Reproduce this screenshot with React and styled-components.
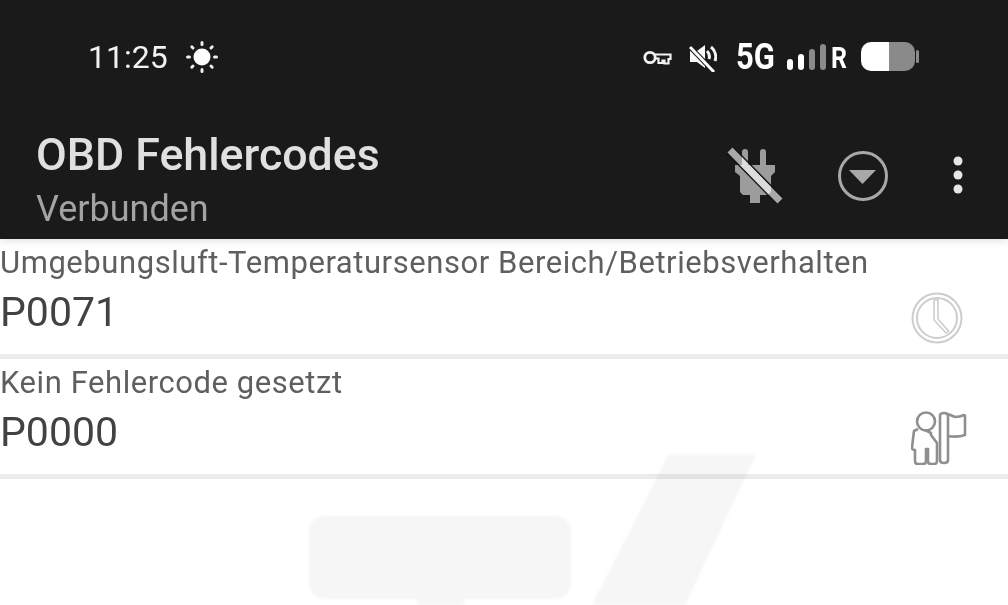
import React from 'react';
import styled, {createGlobalStyle} from 'styled-components';

const GlobalStyle = createGlobalStyle`
    html, body {
        margin: 0;
        padding: 0;
        background: #fff;
        overflow: hidden;
    }
`;

const Page = styled.div`
    position: relative;
    width: 1008px;
    height: 605px;
    overflow: hidden;
    background: #fff;
    font-family: Roboto, "Liberation Sans", sans-serif;
`;

const Watermark = styled.svg`
    position: absolute;
    left: 0;
    top: 0;
    filter: blur(1px);
    mix-blend-mode: multiply;
    pointer-events: none;
`;

const Header = styled.header`
    position: relative;
    height: 239px;
    background: #1a1a1a;
    box-shadow: 0 2px 8px rgba(0, 0, 0, 0.12);
`;

const StatusBar = styled.div`
    display: flex;
    align-items: center;
    justify-content: space-between;
    height: 114px;
    padding: 0 88px 0 88px;
`;

const StatusGroup = styled.div`
    display: flex;
    align-items: center;
`;

const Time = styled.span`
    font-size: 32px;
    color: #f2f2f2;
    margin-right: 18px;
`;

const NetworkLabel = styled.span`
    display: inline-block;
    font-size: ${p => p.$size}px;
    font-weight: 700;
    color: #fff;
    transform: scaleX(${p => p.$squeeze});
    transform-origin: left center;
    width: ${p => p.$width}px;
    margin: ${p => p.$margin};
    line-height: 1;
`;

const AppBar = styled.div`
    display: flex;
    justify-content: space-between;
    padding: 15px 45px 0 36px;
`;

const TitleBlock = styled.div`
    display: flex;
    flex-direction: column;
`;

const Title = styled.div`
    font-size: 44.7px;
    line-height: 52px;
    font-weight: 500;
    color: #e0e0e0;
`;

const Subtitle = styled.div`
    font-size: 36px;
    line-height: 42px;
    margin-top: 7px;
    color: #a3a3a3;
`;

const Actions = styled.div`
    display: flex;
    align-items: flex-start;
    padding-top: 15px;
`;

const List = styled.div`
    position: relative;
`;

const Row = styled.div`
    display: flex;
    justify-content: space-between;
    height: 115px;
    border-bottom: 5px solid #ececec;
    padding-right: ${p => p.$right}px;
`;

const RowText = styled.div`
    display: flex;
    flex-direction: column;
`;

const Label = styled.div`
    font-size: 31px;
    letter-spacing: 0.56px;
    line-height: 36px;
    margin-top: 6px;
    color: #5f5f5f;
`;

const Code = styled.div`
    font-size: 41px;
    line-height: 48px;
    margin-top: 7px;
    color: #424242;
`;

const RowIcon = styled.div`
    padding-top: ${p => p.$top}px;
    svg {
        display: block;
    }
`;

const SunIcon = () => (
    <svg width="32" height="32" viewBox="0 0 32 32">
        <circle cx="16" cy="16" r="8.5" fill="#fff" />
        <g stroke="#eee" strokeWidth="3" strokeLinecap="round">
            <path d="M16 1.5v2M16 28.5v2M1.5 16h2M28.5 16h2M5.8 5.8l1.2 1.2M25 25l1.2 1.2M5.8 26.2L7 25M25 7l1.2-1.2" />
        </g>
    </svg>
);

const KeyIcon = () => (
    <svg width="29" height="18" viewBox="0 0 29 18" style={{marginRight: 17}}>
        <circle cx="7" cy="9.500" r="5.200" fill="none" stroke="#f2f2f2" strokeWidth="2.800" />
        <path d="M12 6.500h15.500v4.500h-2v4.500h-4v-3h-2v2.500h-4v-4.500H12" fill="none" stroke="#f2f2f2" strokeWidth="2.200" />
    </svg>
);

const MuteIcon = () => (
    <svg width="28" height="30" viewBox="0 0 28 30" style={{marginRight: 19}}>
        <path d="M1 9h7l8-6v23l-8-6H1z" fill="#fafafa" />
        <path d="M18 9a8 8 0 0 1 2 8M22 5a13 13 0 0 1 4 14" fill="none" stroke="#f4f4f4" strokeWidth="3" />
        <path d="M1 5l24 25" stroke="#1a1a1a" strokeWidth="5" />
        <path d="M1 5l24 25" stroke="#fafafa" strokeWidth="3" />
    </svg>
);

const SignalIcon = () => (
    <svg width="40" height="27" viewBox="0 0 40 27" style={{marginRight: 4, marginTop: 1}}>
        <rect x="0" y="15" width="6" height="11" rx="3" fill="#fff" />
        <rect x="11" y="10" width="6" height="16" rx="3" fill="#fff" />
        <rect x="22" y="5" width="6" height="21" rx="3" fill="#8a8a8a" />
        <rect x="33" y="0" width="6" height="26" rx="3" fill="#8a8a8a" />
    </svg>
);

const BatteryIcon = () => (
    <svg width="59" height="30" viewBox="0 0 59 30">
        <defs>
            <clipPath id="battery-body">
                <rect x="0" y="0" width="54" height="29" rx="10" />
            </clipPath>
        </defs>
        <g clipPath="url(#battery-body)">
            <rect x="0" y="0" width="28" height="29" fill="#fff" />
            <rect x="28" y="0" width="26" height="29" fill="#8a8a8a" />
        </g>
        <rect x="55" y="8" width="3" height="13" rx="1.5" fill="#8a8a8a" />
    </svg>
);

const PLUG_PATH =
    'M17 8a3 3 0 0 1 6 0v13h12V8a3 3 0 0 1 6 0v13h9v7l-4 4v16l-3 3H35v8H25v-8h-7l-3-3V32l-5-4v-7h7z';

const PlugIcon = () => (
    <svg width="60" height="62" viewBox="0 0 60 62" style={{marginRight: 52}}>
        <defs>
            <clipPath id="plug-body">
                <path d={PLUG_PATH} />
            </clipPath>
        </defs>
        <path d={PLUG_PATH} fill="#9c9c9c" />
        <path d="M5 6l50 51" stroke="#141414" strokeWidth="10" />
        <path d="M5 6l50 51" stroke="#a8a8a8" strokeWidth="7" />
        <path d="M5 6l50 51" stroke="#dcdcdc" strokeWidth="7" clipPath="url(#plug-body)" />
    </svg>
);

const DropdownIcon = () => (
    <svg width="52" height="52" viewBox="0 0 52 52" style={{marginRight: 64, marginTop: 6}}>
        <circle cx="26" cy="26" r="23.5" fill="none" stroke="#a8a8a8" strokeWidth="3" />
        <path d="M12 20h27L25.500 34z" fill="#a8a8a8" />
    </svg>
);

const MoreIcon = () => (
    <svg width="10" height="40" viewBox="0 0 10 40" style={{marginTop: 12}}>
        <circle cx="5" cy="5" r="4.5" fill="#e6e6e6" />
        <circle cx="5" cy="19" r="4.5" fill="#e6e6e6" />
        <circle cx="5" cy="33" r="4.5" fill="#e6e6e6" />
    </svg>
);

const ClockIcon = () => (
    <svg width="52" height="52" viewBox="0 0 52 52">
        <g fill="none" stroke="#cdcdcd">
            <circle cx="26" cy="26" r="24.500" strokeWidth="2" />
            <circle cx="26" cy="26" r="20" strokeWidth="2" />
            <path d="M23 8v20l12 13 2.500-2L27 27V8z" strokeWidth="1.600" />
        </g>
    </svg>
);

const FlagPersonIcon = () => (
    <svg width="56" height="54" viewBox="0 0 56 54">
        <g fill="none" stroke="#8f8f8f" strokeWidth="2.600" strokeLinejoin="round">
            <circle cx="15" cy="10.500" r="9" />
            <path d="M7 18l-4 2-1 8-1 9c0 2 2 2 3 2v11c0 2 1 3 3 3h5c2 0 3-1 3-3V38h2v12c0 2 1 3 3 3h3c2 0 3-1 3-3V32l-6-8v-2l-6-3" />
            <path d="M29 5c0-2 1-3 4-3s4 1 4 3v44c0 2-1 3-4 3s-4-1-4-3z" />
            <path d="M37 3l7 3c4 0 7-1 9-2 1 0 1 1 1 2v18c-6 2-11 2-17 1" />
        </g>
    </svg>
);

const ERRORS = [
    {
        label: 'Umgebungsluft-Temperatursensor Bereich/Betriebsverhalten',
        code: 'P0071',
        icon: <ClockIcon />,
        top: 53,
        right: 45,
    },
    {
        label: 'Kein Fehlercode gesetzt',
        code: 'P0000',
        icon: <FlagPersonIcon />,
        top: 52,
        right: 41,
    },
];

export default function App() {
    return (
        <Page>
            <GlobalStyle />
            <Header>
                <StatusBar>
                    <StatusGroup>
                        <Time>11:25</Time>
                        <SunIcon />
                    </StatusGroup>
                    <StatusGroup>
                        <KeyIcon />
                        <MuteIcon />
                        <NetworkLabel $size={36} $squeeze={0.86} $width={51} $margin="0">5G</NetworkLabel>
                        <SignalIcon />
                        <NetworkLabel $size={29} $squeeze={0.86} $width={30} $margin="3px 0 0 0">R</NetworkLabel>
                        <BatteryIcon />
                    </StatusGroup>
                </StatusBar>
                <AppBar>
                    <TitleBlock>
                        <Title>OBD Fehlercodes</Title>
                        <Subtitle>Verbunden</Subtitle>
                    </TitleBlock>
                    <Actions>
                        <PlugIcon />
                        <DropdownIcon />
                        <MoreIcon />
                    </Actions>
                </AppBar>
            </Header>
            <List>
                {ERRORS.map(error => (
                    <Row key={error.code} $right={error.right}>
                        <RowText>
                            <Label>{error.label}</Label>
                            <Code>{error.code}</Code>
                        </RowText>
                        <RowIcon $top={error.top}>{error.icon}</RowIcon>
                    </Row>
                ))}
            </List>
            <Watermark width="1008" height="605" viewBox="0 0 1008 605">
                <path d="M668 455h88L685 605h-93z" fill="#f6f6f6" />
                <rect x="309" y="516" width="262" height="83" rx="16" fill="#f6f6f6" />
                <rect x="418" y="595" width="46" height="12" fill="#f6f6f6" />
            </Watermark>
        </Page>
    );
}
